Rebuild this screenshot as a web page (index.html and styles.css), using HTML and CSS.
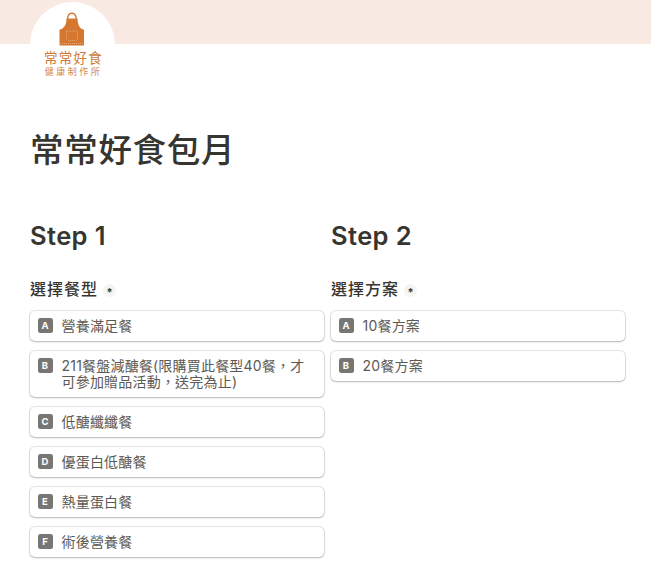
FILE: index.html
```html
<!DOCTYPE html>
<html lang="zh-Hant">
<head>
<meta charset="utf-8">
<title>常常好食包月</title>
<link rel="stylesheet" href="styles.css">
</head>
<body>
<header class="banner">
  <div class="logo">
    <svg class="apron" viewBox="0 0 26 34" width="26" height="34" aria-hidden="true">
      <path class="apron-strap" d="M8.5 9 C8.5 3.2 10 1.2 13 1.2 C16 1.2 17.5 3.2 17.5 9"/>
      <path class="apron-body" d="M7.5 6.500 H18.500 C18.500 11 19.500 14 22 16.500 C23.500 17.200 25 17.500 25 18 V33.500 H0.500 V18 C0.500 17.500 2 17.200 3.500 16.500 C6.500 14 7.500 11 7.500 6.500 Z"/>
      <path class="apron-stitch" d="M7.500 19 H18.500 V26.500 C18.500 28 17.500 28.500 16.500 28.500 H9.500 C8.500 28.500 7.500 28 7.500 26.500 Z"/>
      <path class="apron-stitch" d="M1 31.500 H25"/>
    </svg>
    <div class="logo-name">常常好食</div>
    <div class="logo-sub">健康制作所</div>
  </div>
</header>
<main class="page">
  <h1 class="title">常常好食包月</h1>
  <div class="steps">
    <section class="step">
      <h2 class="step-title">Step 1</h2>
      <div class="field-label">選擇餐型<span class="required">*</span></div>
      <div class="options">
        <div class="option"><span class="key">A</span><span class="text">營養滿足餐</span></div>
        <div class="option"><span class="key">B</span><span class="text">211餐盤減醣餐(限購買此餐型40餐，才可參加贈品活動，送完為止)</span></div>
        <div class="option"><span class="key">C</span><span class="text">低醣纖纖餐</span></div>
        <div class="option"><span class="key">D</span><span class="text">優蛋白低醣餐</span></div>
        <div class="option"><span class="key">E</span><span class="text">熱量蛋白餐</span></div>
        <div class="option"><span class="key">F</span><span class="text">術後營養餐</span></div>
      </div>
    </section>
    <section class="step">
      <h2 class="step-title">Step 2</h2>
      <div class="field-label">選擇方案<span class="required">*</span></div>
      <div class="options">
        <div class="option"><span class="key">A</span><span class="text">10餐方案</span></div>
        <div class="option"><span class="key">B</span><span class="text">20餐方案</span></div>
      </div>
    </section>
  </div>
</main>
</body>
</html>
```
FILE: styles.css
```css
* { box-sizing: border-box; }
html, body { margin: 0; padding: 0; }
body {
  background: #fff;
  color: #37352f;
  font-family: Inter, "Noto Sans CJK TC", sans-serif;
  overflow: hidden;
  height: 585px;
}
.banner {
  height: 44px;
  background: #f8e9e3;
  position: relative;
}
.logo {
  position: absolute;
  left: 30px;
  top: 2px;
  width: 85px;
  height: 85px;
  border-radius: 50%;
  background: #fff;
  display: flex;
  flex-direction: column;
  align-items: center;
  padding-top: 10px;
}
.apron { display: block; margin-left: -1px; }
.apron-strap { fill: none; stroke: #d5772f; stroke-width: 1.4; }
.apron-body { fill: #d5772f; }
.apron-stitch { fill: none; stroke: #f0c9a6; stroke-width: .6; stroke-dasharray: 1 1; }
.logo-name {
  font-family: "Noto Sans CJK TC", sans-serif;
  font-weight: 400;
  color: #cf7a37;
  font-size: 13.500px;
  line-height: 15px;
  letter-spacing: 1.200px;
  margin: 4px 0 0 2px;
  white-space: nowrap;
}
.logo-sub {
  font-family: "Noto Sans CJK TC", sans-serif;
  font-weight: 400;
  color: #d38a50;
  font-size: 9px;
  line-height: 11px;
  letter-spacing: 2.500px;
  margin-top: 1px;
  margin-left: 2px;
  white-space: nowrap;
}
.page { padding: 85px 26px 0 30px; }
.title {
  margin: 0;
  font-size: 33.500px;
  line-height: 42px;
  font-weight: 500;
  letter-spacing: .7px;
  color: #37352f;
}
.steps {
  display: grid;
  grid-template-columns: 294px 294px;
  column-gap: 7px;
  margin-top: 49px;
}
.step-title {
  margin: 0;
  font-size: 25.500px;
  line-height: 32px;
  font-weight: 600;
  letter-spacing: .4px;
}
.field-label {
  display: flex;
  align-items: center;
  margin-top: 26px;
  font-size: 16px;
  line-height: 22px;
  font-weight: 500;
  letter-spacing: 1px;
}
.required {
  width: 13px;
  height: 13px;
  margin: 3px 0 0 5px;
  border-radius: 50%;
  background: #f5f5f4;
  font-size: 11px;
  line-height: 16px;
  font-weight: 700;
  text-align: center;
  letter-spacing: 0;
}
.options {
  display: flex;
  flex-direction: column;
  gap: 10px;
  margin-top: 10.500px;
  margin-left: -.5px;
}
.option {
  display: flex;
  align-items: flex-start;
  gap: 9px;
  min-height: 30px;
  padding: 7px 18px 7px 8px;
  border-radius: 5px;
  background: #fff;
  box-shadow: 0 0 0 1px rgba(55, 53, 47, .12), 0 1px 2px rgba(55, 53, 47, .25);
  font-size: 14px;
  line-height: 16px;
  letter-spacing: .2px;
  color: #5c5a55;
}
.key {
  flex: none;
  width: 15px;
  height: 15px;
  margin-top: .5px;
  border-radius: 2.500px;
  background: #787672;
  color: #fff;
  font-size: 9.500px;
  font-weight: 700;
  line-height: 15px;
  text-align: center;
  letter-spacing: 0;
}
.text { display: block; }
```
